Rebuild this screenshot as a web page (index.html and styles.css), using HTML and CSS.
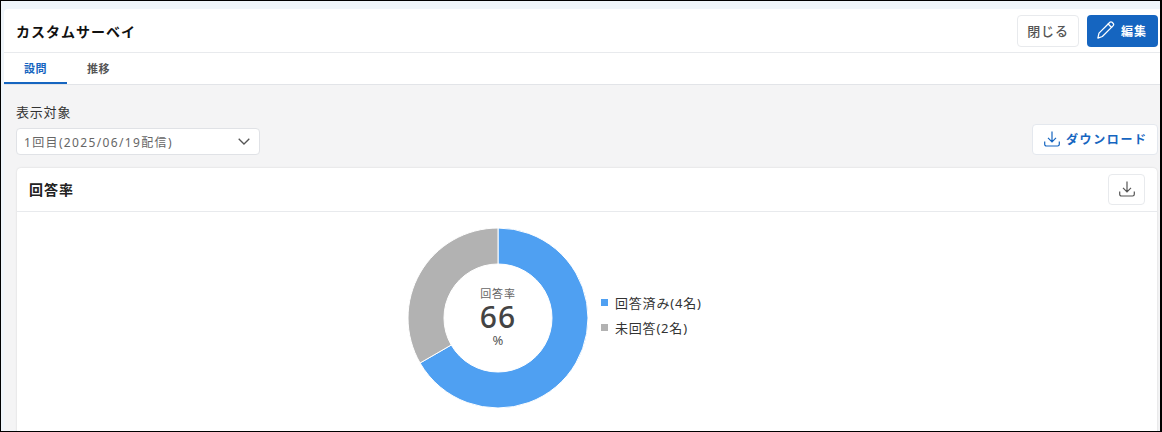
FILE: index.html
```html
<!DOCTYPE html>
<html lang="ja">
  <head>
    <meta charset="UTF-8" />
    <title>カスタムサーベイ</title>
    <link rel="stylesheet" href="styles.css">
  </head>

  <body>
    <div class="frame">
      <div class="topHead">
        <div class="pageTitle">カスタムサーベイ</div>
        <div class="btnClose">閉じる</div>
        <div class="btnEdit">
          <svg width="21" height="21" viewBox="0 0 22 22" fill="none" stroke="#ffffff" stroke-width="1.3" stroke-linejoin="round" stroke-linecap="round">
            <path d="M3 19l1.2-5.2L15.6 2.4a1.6 1.6 0 0 1 2.3 0l1.2 1.2a1.6 1.6 0 0 1 0 2.3L7.7 17.3z" />
            <path d="M13.8 4.2l3.6 3.6" />
          </svg>
          <span>編集</span>
        </div>
      </div>
      <div class="tabs">
        <div class="tab tabActive">設問</div>
        <div class="tab">推移</div>
      </div>
      <div class="main">
        <div class="filterRow">
          <div class="filter">
            <div class="filterLabel">表示対象</div>
            <div class="selectBox">
              <span>1回目(2025/06/19配信)</span>
              <svg width="12" height="7" viewBox="0 0 12 7" fill="none" stroke="#555555" stroke-width="1.3">
                <path d="M.7.7L6 6l5.3-5.3" />
              </svg>
            </div>
          </div>
          <div class="btnDownload">
            <svg width="16" height="16" viewBox="0 0 16 16" fill="none" stroke="#1565c0" stroke-width="1.2">
              <path d="M8 .5v10M4 6.8l4 4 4-4M.7 10.5v2.8a1.7 1.7 0 0 0 1.7 1.7h11.2a1.7 1.7 0 0 0 1.7-1.7v-2.8" />
            </svg>
            <span>ダウンロード</span>
          </div>
        </div>
        <div class="card">
          <div class="cardHead">
            <div class="cardTitle">回答率</div>
            <div class="btnIcon">
              <svg width="16" height="16" viewBox="0 0 16 16" fill="none" stroke="#555555" stroke-width="1.2">
                <path d="M8 .5v10M4 6.8l4 4 4-4M.7 10.5v2.8a1.7 1.7 0 0 0 1.7 1.7h11.2a1.7 1.7 0 0 0 1.7-1.7v-2.8" />
              </svg>
            </div>
          </div>
          <div class="chartArea">
            <div class="donut">
              <svg width="182" height="182" viewBox="0 0 182 182">
                <path d="M91 1A90 90 0 1 1 13.06 136L44.23 118A54 54 0 1 0 91 37z" fill="#4fa0f2" stroke="#ffffff" stroke-width="1" />
                <path d="M13.06 136A90 90 0 0 1 91 1V37A54 54 0 0 0 44.23 118z" fill="#b2b2b2" stroke="#ffffff" stroke-width="1" />
              </svg>
              <div class="donutText">
                <div class="donutLabel">回答率</div>
                <div class="donutValue">66</div>
                <div class="donutUnit">%</div>
              </div>
            </div>
            <ul class="legend">
              <li><i class="dot dotBlue"></i>回答済み(4名)</li>
              <li><i class="dot dotGray"></i>未回答(2名)</li>
            </ul>
          </div>
        </div>
      </div>
    </div>
  </body>
</html>
```

FILE: styles.css
```css
html,
body,
ul,
li {
  margin: 0;
  padding: 0;
}

ul,
li {
  list-style: none;
}

body {
  width: 1162px;
  height: 432px;
  overflow: hidden;
  font-family: 'Noto Sans', 'Noto Sans CJK JP', sans-serif;
  color: #333333;
}

.frame {
  box-sizing: border-box;
  width: 1162px;
  height: 432px;
  overflow: hidden;
  border: 1px solid #000000;
  border-right-width: 2px;
  padding: 8px 0 0 3px;
  background: #eff5fa;
}

.topHead {
  display: flex;
  align-items: center;
  height: 43px;
  padding: 0 0 0 12px;
  background: #ffffff;
  border-bottom: 1px solid #e8eaed;
  border-radius: 4px 0 0 0;
}

.pageTitle {
  flex: 1;
  font-size: 14px;
  font-weight: 700;
  letter-spacing: 1px;
  color: #111111;
}

.btnClose {
  box-sizing: border-box;
  width: 62px;
  height: 32px;
  line-height: 30px;
  text-align: center;
  font-size: 13px;
  font-weight: 500;
  letter-spacing: 0.8px;
  color: #555555;
  background: #ffffff;
  border: 1px solid #e8eaed;
  border-radius: 4px;
}

.btnEdit {
  display: flex;
  align-items: center;
  gap: 5px;
  box-sizing: border-box;
  width: 71px;
  height: 32px;
  margin: 0 2px 0 8px;
  padding-left: 8px;
  font-size: 12px;
  font-weight: 700;
  letter-spacing: 1px;
  color: #ffffff;
  background: #1565c0;
  border-radius: 4px;
}

.tabs {
  display: flex;
  height: 31px;
  background: #ffffff;
  border-bottom: 1px solid #e2e4e8;
}

.tab {
  width: 63px;
  height: 31px;
  line-height: 32px;
  text-align: center;
  font-size: 11px;
  font-weight: 700;
  letter-spacing: 0.6px;
  color: #555555;
}

.tabActive {
  box-sizing: border-box;
  color: #1565c0;
  border-bottom: 2px solid #1565c0;
}

.main {
  height: 345px;
  padding: 0 2px 0 12px;
  background: #f4f4f5;
}

.filterRow {
  display: flex;
  justify-content: space-between;
  align-items: flex-end;
  box-sizing: border-box;
  height: 83px;
  padding-bottom: 13px;
}

.filterLabel {
  font-size: 13px;
  line-height: 16px;
  letter-spacing: 0.8px;
  margin-bottom: 8px;
  color: #333333;
}

.selectBox {
  display: flex;
  justify-content: space-between;
  align-items: center;
  box-sizing: border-box;
  width: 244px;
  height: 27px;
  padding: 0 9px 0 7px;
  font-size: 12px;
  letter-spacing: 1.35px;
  color: #666666;
  background: #ffffff;
  border: 1px solid #e0e2e6;
  border-radius: 4px;
}

.btnDownload {
  display: flex;
  align-items: center;
  gap: 6px;
  box-sizing: border-box;
  width: 126px;
  height: 31px;
  padding: 0 0 1px 11px;
  font-size: 12px;
  font-weight: 700;
  letter-spacing: 1.6px;
  color: #1565c0;
  background: #ffffff;
  border: 1px solid #e4e8ee;
  border-radius: 4px;
}

.card {
  margin: 0 1px;
  background: #ffffff;
  border-radius: 4px;
  box-shadow: 0 0 2px rgba(0, 0, 0, 0.15);
}

.cardHead {
  display: flex;
  justify-content: space-between;
  align-items: center;
  height: 42px;
  padding: 0 12px 1px;
  border-bottom: 1px solid #e8eaed;
}

.cardTitle {
  font-size: 14px;
  font-weight: 700;
  letter-spacing: 1px;
  color: #222222;
}

.btnIcon {
  display: flex;
  justify-content: center;
  align-items: center;
  box-sizing: border-box;
  width: 37px;
  height: 31px;
  background: #ffffff;
  border: 1px solid #e8eaed;
  border-radius: 4px;
}

.chartArea {
  display: flex;
  align-items: flex-start;
  gap: 12px;
  height: 230px;
  padding: 15px 0 0 390px;
}

.donut {
  position: relative;
  width: 182px;
  height: 182px;
}

.donut svg {
  display: block;
}

.donutText {
  position: absolute;
  left: 0;
  right: 0;
  top: 59px;
  text-align: center;
  color: #444444;
}

.donutLabel {
  font-size: 11px;
  line-height: 16px;
  letter-spacing: 0.8px;
  color: #666666;
}

.donutValue {
  font-size: 30px;
  line-height: 30px;
  font-weight: 500;
  letter-spacing: 1px;
}

.donutUnit {
  font-size: 13px;
  line-height: 16px;
  color: #555555;
}

.legend {
  padding-top: 63px;
  font-size: 13px;
  letter-spacing: 0.8px;
  color: #333333;
}

.legend li {
  display: flex;
  align-items: center;
  height: 25px;
}

.dot {
  width: 7px;
  height: 7px;
  margin-right: 7px;
}

.dotBlue {
  background: #4fa0f2;
}

.dotGray {
  background: #b2b2b2;
}
```
